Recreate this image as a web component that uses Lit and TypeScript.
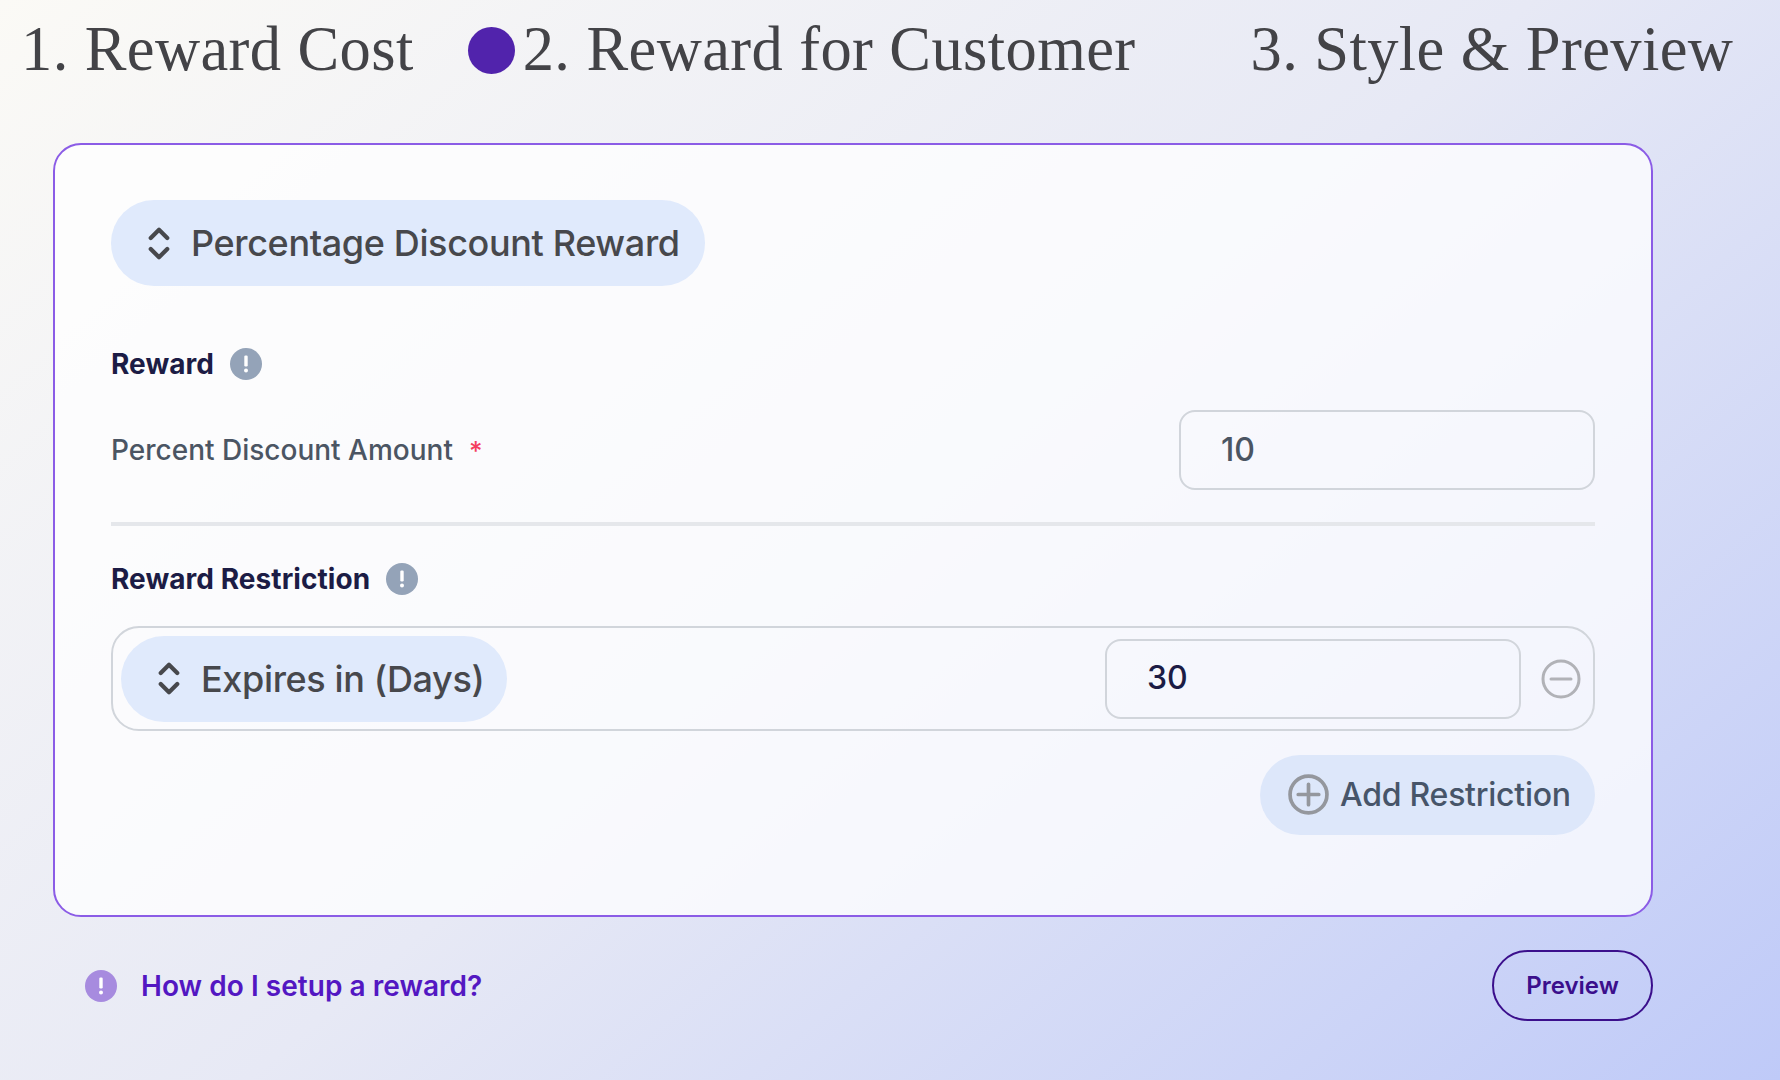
import { LitElement, html, css } from "lit";
import { customElement } from "lit/decorators.js";

const chevrons = html`<svg class="chev" viewBox="0 0 24 36" fill="none" stroke="currentColor" stroke-width="4.6" stroke-linecap="round" stroke-linejoin="round"><path d="M3 12 L12 3 L21 12"/><path d="M3 24 L12 33 L21 24"/></svg>`;
const info = (cls: string) => html`<svg class="info ${cls}" viewBox="0 0 32 32"><circle cx="16" cy="16" r="16" fill="currentColor"/><rect x="14.3" y="7.5" width="3.4" height="11" rx="1.2" fill="#fff"/><circle cx="16" cy="22.5" r="2" fill="#fff"/></svg>`;

@customElement("app-root")
export class AppRoot extends LitElement {
  static styles = css`
    :host { display: block; width: 1780px; height: 1080px; overflow: hidden; font-family: Inter, "Liberation Sans", sans-serif;
      background: linear-gradient(140deg, #fbfaf6 0%, #e7e9f5 50%, #bfcaf8 100%); }
    .tabs { display: flex; align-items: center; height: 100px; padding-left: 21px; font-family: "Liberation Serif", serif; font-size: 62.5px; letter-spacing: .4px; color: #434347; white-space: nowrap; }
    .tab { display: block; padding-bottom: 2px; }
    .dot { width: 47px; height: 47px; border-radius: 50%; background: #5123ac; margin: 0 8px 0 54px; flex: none; }
    .tab.last { margin-left: 115px; }
    .card { box-sizing: border-box; margin: 43px 0 0 53px; width: 1600px; height: 774px; border: 2px solid #8b5ce6; border-radius: 28px; background: rgba(255,255,255,.75); padding: 55px 56px 0; }
    .pill { display: inline-flex; align-items: center; box-sizing: border-box; height: 86px; border-radius: 43px; background: #e0eafc; color: #47484c; font-size: 36px; font-weight: 500; letter-spacing: -.36px; white-space: nowrap; }
    .pill.type { width: 594px; padding-left: 37px; gap: 21px; }
    .pill.exp { width: 386px; padding-left: 37px; gap: 21px; }
    .chev { width: 22px; height: 33px; flex: none; }
    .head { display: flex; align-items: center; gap: 16px; font-size: 28px; font-weight: 700; letter-spacing: .06px; color: #1c1c45; height: 32px; }
    .info { width: 32px; height: 32px; flex: none; color: #94a3b8; }
    .info.purple { color: #a78bdf; }
    .head.r1 { margin-top: 62px; }
    .field { display: flex; align-items: center; justify-content: space-between; margin-top: 30px; }
    .label { font-size: 28px; font-weight: 500; color: #4b5563; }
    .star { color: #f43f5e; margin-left: 16px; font-size: 26px; }
    .input { box-sizing: border-box; width: 416px; height: 80px; border: 2px solid #d1d5db; border-radius: 16px; padding: 0 0 2px 40px; display: flex; align-items: center; font-size: 32px; font-weight: 500; color: #4b5563; flex: none; }
    .input.dark { color: #1c1c45; }
    .rule { height: 4px; background: #e5e7eb; margin-top: 32px; }
    .head.r2 { margin-top: 37px; }
    .restr { box-sizing: border-box; display: flex; align-items: center; height: 105px; margin-top: 31px; border: 2px solid #d1d5db; border-radius: 28px; padding: 0 12px 0 8px; }
    .restr .pill { margin-right: auto; }
    .minus { width: 40px; height: 40px; margin-left: 20px; flex: none; }
    .actions { display: flex; justify-content: flex-end; margin-top: 24px; }
    .add { display: inline-flex; align-items: center; box-sizing: border-box; width: 335px; height: 80px; border-radius: 40px; background: #dde7fa; padding: 0 0 2px 28px; gap: 11px; font-size: 32px; font-weight: 500; letter-spacing: -.25px; color: #475569; white-space: nowrap; }
    .plus { width: 41px; height: 41px; flex: none; }
    .foot { display: flex; align-items: center; margin: 33px 0 0 85px; width: 1568px; height: 71px; }
    .help { font-size: 28px; font-weight: 600; letter-spacing: .04px; color: #5317c2; margin-left: 24px; }
    .preview { box-sizing: border-box; margin-left: auto; width: 161px; height: 71px; border: 2px solid #3b0f8c; border-radius: 36px; display: flex; align-items: center; justify-content: center; font-size: 24px; font-weight: 600; color: #3b0f8c; }
  `;

  render() {
    return html`
      <div class="tabs">
        <span class="tab">1. Reward Cost</span>
        <span class="dot"></span>
        <span class="tab">2. Reward for Customer</span>
        <span class="tab last">3. Style &amp; Preview</span>
      </div>
      <div class="card">
        <div class="pill type">${chevrons}<span>Percentage Discount Reward</span></div>
        <div class="head r1"><span>Reward</span>${info("")}</div>
        <div class="field">
          <div class="label">Percent Discount Amount<span class="star">*</span></div>
          <div class="input">10</div>
        </div>
        <div class="rule"></div>
        <div class="head r2"><span>Reward Restriction</span>${info("")}</div>
        <div class="restr">
          <div class="pill exp">${chevrons}<span>Expires in (Days)</span></div>
          <div class="input dark">30</div>
          <svg class="minus" viewBox="0 0 40 40" fill="none" stroke="#b1b2b7" stroke-width="3"><circle cx="20" cy="20" r="18"/><path d="M10 20 H30" stroke-linecap="round"/></svg>
        </div>
        <div class="actions">
          <div class="add"><svg class="plus" viewBox="0 0 40 40" fill="none" stroke="#94979d" stroke-width="3.6"><circle cx="20" cy="20" r="18"/><path d="M10 20 H30 M20 10 V30" stroke-linecap="round"/></svg><span>Add Restriction</span></div>
        </div>
      </div>
      <div class="foot">
        ${info("purple")}
        <span class="help">How do I setup a reward?</span>
        <div class="preview">Preview</div>
      </div>
    `;
  }
}
